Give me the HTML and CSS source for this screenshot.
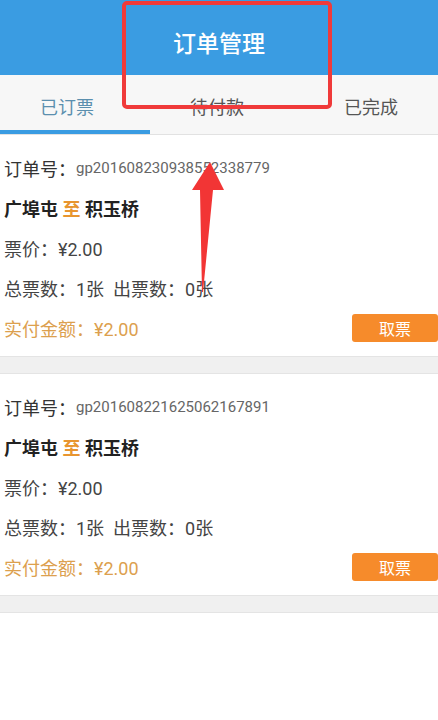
FILE: index.html
```html
<!DOCTYPE html>
<html lang="zh-CN">
<head>
<meta charset="utf-8">
<title>订单管理</title>
<link rel="stylesheet" href="styles.css">
</head>
<body>
<div class="app">
  <header class="topbar">订单管理</header>
  <nav class="tabs">
    <div class="tab first active">已订票</div>
    <div class="tab">待付款</div>
    <div class="tab last">已完成</div>
  </nav>
  <section class="card">
    <div class="row"><span class="label">订单号：</span><span class="orderno">gp201608230938552338779</span></div>
    <div class="row route">广埠屯 <span class="to">至</span> 积玉桥</div>
    <div class="row">票价：¥2.00</div>
    <div class="row">总票数：1张&nbsp;&nbsp;出票数：0张</div>
    <div class="row pay"><span class="amount">实付金额：¥2.00</span><button class="btn">取票</button></div>
  </section>
  <div class="sep"></div>
  <section class="card">
    <div class="row"><span class="label">订单号：</span><span class="orderno">gp201608221625062167891</span></div>
    <div class="row route">广埠屯 <span class="to">至</span> 积玉桥</div>
    <div class="row">票价：¥2.00</div>
    <div class="row">总票数：1张&nbsp;&nbsp;出票数：0张</div>
    <div class="row pay"><span class="amount">实付金额：¥2.00</span><button class="btn">取票</button></div>
  </section>
  <div class="sep"></div>

  <div class="mark-box"></div>
  <svg class="mark-arrow" width="40" height="135" viewBox="0 0 40 135">
    <polygon points="20,0 34,28 23,28 13,130 12,130 10,28 2,28" fill="#f23535"/>
  </svg>
</div>
</body>
</html>
```

FILE: styles.css
```css
* { box-sizing: border-box; }
html, body { margin: 0; padding: 0; background: #ffffff; }
body {
  font-family: Roboto, "Noto Sans CJK SC", "Noto Sans", sans-serif;
  color: #333;
}
.app { position: relative; width: 438px; min-height: 720px; background: #fff; }

.topbar {
  height: 75px;
  background: #3a9ce2;
  color: #fff;
  font-size: 23px;
  font-weight: 500;
  display: flex;
  align-items: center;
  justify-content: center;
  padding-top: 8px;
}

.tabs {
  display: flex;
  height: 60px;
  background: #f7f7f7;
  border-bottom: 1px solid #e2e2e2;
}
.tab {
  flex: 1;
  display: flex;
  align-items: center;
  justify-content: center;
  font-size: 18px;
  color: #555;
  padding-top: 6px;
  border-bottom: 4px solid transparent;
}
.tab.first { padding-right: 16px; }
.tab.last { padding-left: 20px; }
.tab.active { color: #5b8fae; border-bottom-color: #3a9ce2; }

.card {
  padding: 13px 0 8px 4px;
  background: #fff;
}
.row {
  height: 40px;
  display: flex;
  align-items: center;
  font-size: 18px;
  color: #444;
}
.label { color: #333; }
.orderno { font-size: 15px; color: #666; margin-left: 0; }
.route { font-weight: 700; color: #222; white-space: pre; }
.to { color: #e8952f; }
.pay { justify-content: space-between; }
.amount { color: #dca04e; }
.btn {
  width: 86px;
  height: 28px;
  border: none;
  border-radius: 3px;
  background: #f68b2b;
  color: #fff;
  font-family: inherit;
  font-size: 16px;
  padding: 0;
  margin-right: 0;
}

.sep {
  height: 18px;
  background: #f0f0f0;
  border-top: 1px solid #e4e4e4;
  border-bottom: 1px solid #e4e4e4;
}

.mark-box {
  position: absolute;
  left: 122px;
  top: 1px;
  width: 210px;
  height: 108px;
  border: 4px solid #f03a3a;
  border-radius: 5px;
}
.mark-arrow {
  position: absolute;
  left: 190px;
  top: 162px;
}
```
